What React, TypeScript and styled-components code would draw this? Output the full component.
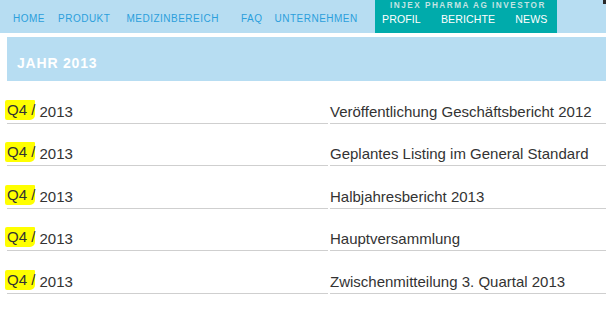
import { FC } from "react";
import styled, { createGlobalStyle } from "styled-components";

const Colors = {
  SKY: "#b7ddf2",
  NAVTEXT: "#2b9fdc",
  TEAL: "#00abab",
  TEXT: "#333333",
  LINE: "#cfcfcf",
  MARKER: "#ffff00",
};

const mainNav = [
  { label: "HOME", ml: 13 },
  { label: "PRODUKT", ml: 13 },
  { label: "MEDIZINBEREICH", ml: 16 },
  { label: "FAQ", ml: 22 },
  { label: "UNTERNEHMEN", ml: 12 },
];

const investorNav = ["PROFIL", "BERICHTE", "NEWS"];

const events = [
  "Veröffentlichung Geschäftsbericht 2012",
  "Geplantes Listing im General Standard",
  "Halbjahresbericht 2013",
  "Hauptversammlung",
  "Zwischenmitteilung 3. Quartal 2013",
];

const App: FC = () => (
  <>
    <GlobalStyle />
    <StyledPage>
      <StyledNavbar>
        <nav className="main">
          {mainNav.map((item) => (
            <NavLink key={item.label} $ml={item.ml}>
              {item.label}
            </NavLink>
          ))}
        </nav>
        <StyledInvestor>
          <h6>INJEX PHARMA AG INVESTOR</h6>
          <div>
            {investorNav.map((label) => (
              <span key={label}>{label}</span>
            ))}
          </div>
        </StyledInvestor>
        <StyledCorner />
      </StyledNavbar>

      <StyledYear>JAHR 2013</StyledYear>

      <StyledList>
        {events.map((title) => (
          <Row key={title}>
            <div className="date">
              <Marker>Q4 /</Marker> 2013
            </div>
            <div className="title">{title}</div>
          </Row>
        ))}
      </StyledList>
    </StyledPage>
  </>
);

const GlobalStyle = createGlobalStyle`
  html, body {
    margin: 0;
    padding: 0;
    background: #ffffff;
  }
  body {
    font-family: "Liberation Sans", Arial, sans-serif;
  }
`;

const StyledPage = styled.div`
  width: 606px;
  height: 326px;
  overflow: hidden;
`;

const StyledNavbar = styled.header`
  height: 33px;
  background: ${Colors.SKY};
  display: flex;
  align-items: stretch;

  nav.main {
    display: flex;
    align-items: center;
    width: 375px;
    padding-top: 3px;
    box-sizing: border-box;
  }
`;

const NavLink = styled.a<{ $ml: number }>`
  margin-left: ${(p) => p.$ml}px;
  font-size: 10px;
  letter-spacing: 0.5px;
  color: ${Colors.NAVTEXT};
  white-space: nowrap;
`;

const StyledInvestor = styled.div`
  width: 182px;
  background: ${Colors.TEAL};
  display: flex;
  flex-direction: column;

  h6 {
    margin: 1px 0 0 15px;
    font-size: 8.2px;
    font-weight: bold;
    letter-spacing: 1.5px;
    line-height: 9px;
    color: #c4e3e3;
    white-space: nowrap;
  }

  div {
    display: flex;
    gap: 20px;
    margin: 3px 0 0 7px;
    font-size: 10.6px;
    line-height: 13px;
    letter-spacing: 0.1px;
    color: #ffffff;
  }
`;

const StyledCorner = styled.div`
  flex: 1;
  position: relative;

  &::after {
    content: "";
    position: absolute;
    top: 0;
    right: 0;
    width: 3px;
    height: 4px;
    background: #2a2a2a;
  }
`;

const StyledYear = styled.h2`
  margin: 4px 0 0 7px;
  height: 44px;
  background: ${Colors.SKY};
  display: flex;
  align-items: center;
  padding: 7px 0 0 10px;
  box-sizing: border-box;
  font-size: 14px;
  font-weight: bold;
  letter-spacing: 0.8px;
  color: #ffffff;
`;

const StyledList = styled.section`
  display: flex;
  flex-direction: column;
`;

const Row = styled.div`
  height: 42.5px;
  display: grid;
  grid-template-columns: 321px 1fr;
  column-gap: 2px;
  margin-left: 7px;
  font-size: 15px;
  line-height: 17px;
  color: ${Colors.TEXT};

  & > div {
    display: flex;
    align-items: flex-end;
    padding-bottom: 3px;
    border-bottom: 1px solid ${Colors.LINE};
    white-space: pre;
  }
`;

const Marker = styled.span`
  background: ${Colors.MARKER};
  margin-left: -2px;
  padding: 1px 0 2px 2px;
  border-radius: 2px 1px 5px 2px;
`;

export default App;
